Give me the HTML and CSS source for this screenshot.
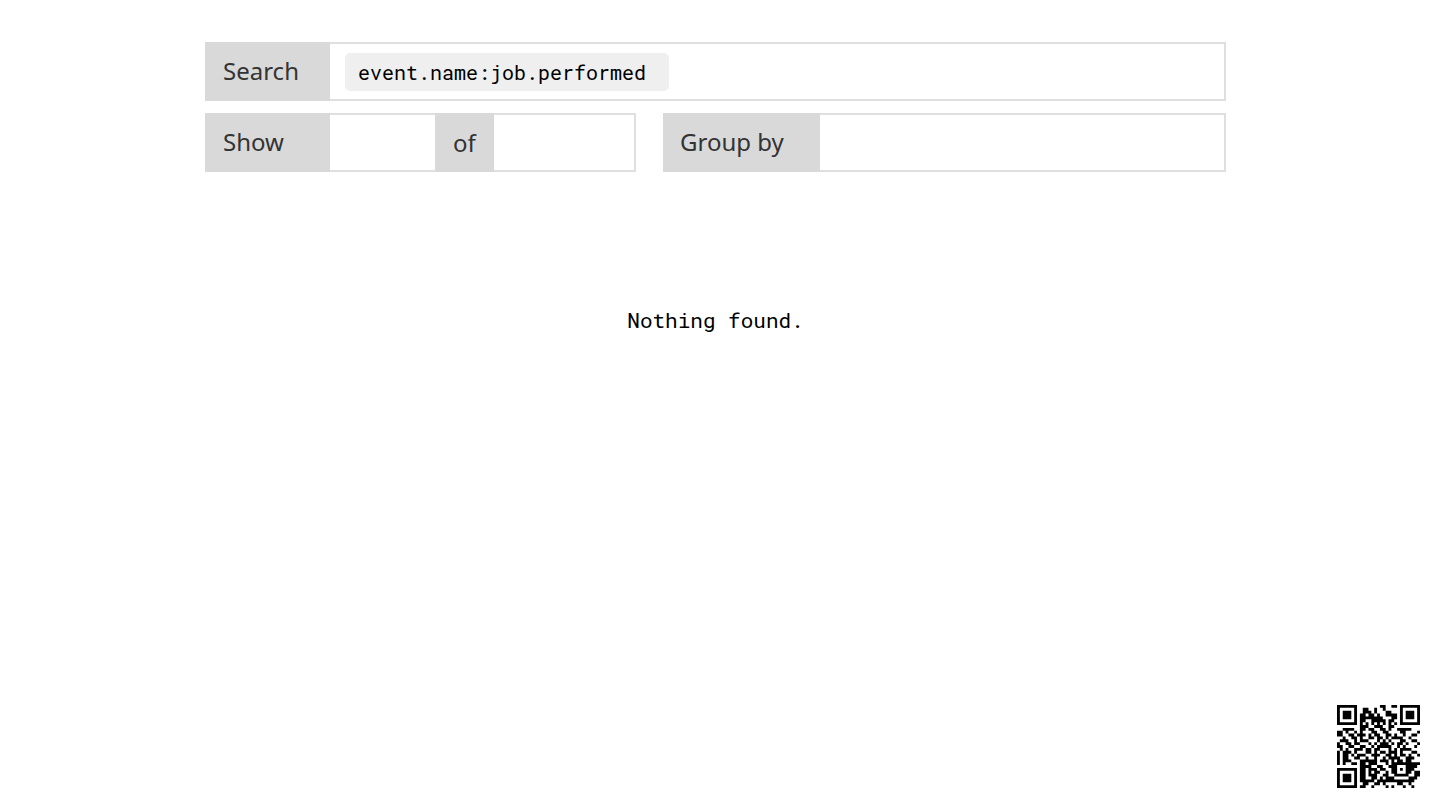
FILE: index.html
```html
<!DOCTYPE html>
<html lang="en">
<head>
    <meta charset="UTF-8">
    <meta name="viewport" content="width=device-width, initial-scale=1.0">
    <title>Event search</title>
    <link rel="stylesheet" href="styles.css">
</head>
<body>
    <main class="page">
        <form class="filters">
            <div class="field field-search">
                <label class="label" for="search">Search</label>
                <div class="tokens">
                    <input class="token" type="text" id="search" value="event.name:job.performed" spellcheck="false">
                </div>
            </div>
            <div class="field">
                <label class="label" for="show">Show</label>
                <input class="input input-short" type="text" id="show">
                <label class="label label-of" for="of">of</label>
                <input class="input" type="text" id="of">
            </div>
            <div class="field">
                <label class="label label-group" for="group">Group by</label>
                <input class="input" type="text" id="group">
            </div>
        </form>

        <p class="empty">Nothing found.</p>
    </main>

    <svg class="qr" id="qr" viewBox="0 0 29 29" role="img" aria-label="QR code"></svg>

    <script src="qr.js"></script>
</body>
</html>
```
FILE: styles.css
```css
* {
    box-sizing: border-box;
}
body {
    margin: 0;
    background: #fff;
    color: #000;
    font-family: "Noto Sans", sans-serif;
}
.page {
    padding: 42px 214px 0 205px;
}
.filters {
    display: grid;
    grid-template-columns: 431fr 563fr;
    gap: 12px 27px;
}
.field {
    display: flex;
    min-width: 0;
    height: 59px;
    border: 2px solid #dfdfdf;
}
.field-search {
    grid-column: 1 / -1;
}
.label {
    flex: none;
    width: 125px;
    margin: -2px 0 -2px -2px;
    padding-left: 18px;
    background: #d9d9d9;
    color: #333;
    font-size: 24px;
    line-height: 58px;
}
.label-of {
    width: 59px;
    margin-left: 0;
    line-height: 60px;
}
.label-group {
    width: 157px;
    padding-left: 17px;
}
.input {
    flex: 1;
    min-width: 0;
    padding: 0 12px;
    border: none;
    background: none;
    font-family: "Roboto Mono", "DejaVu Sans Mono", monospace;
    font-size: 20px;
}
.input-short {
    flex: none;
    width: 105px;
}
.tokens {
    flex: 1;
    display: flex;
    align-items: center;
    padding-left: 15px;
}
.token {
    width: 324px;
    height: 38px;
    padding: 0 13px;
    border: none;
    border-radius: 5px;
    background: #efefef;
    color: #000;
    font-family: "Roboto Mono", "DejaVu Sans Mono", monospace;
    font-size: 20px;
}
.input:focus,
.token:focus {
    outline: none;
}
.empty {
    margin: 133px 0 0;
    text-align: center;
    font-family: "Roboto Mono", "DejaVu Sans Mono", monospace;
    font-size: 21px;
    line-height: 30px;
}
.qr {
    position: fixed;
    right: 20px;
    bottom: 22px;
    width: 83px;
    height: 83px;
}
```
FILE: qr.js
```js
const rows = [
    '11111110000000011001101111111',
    '10000010011001001000001000001',
    '10111010011101000110001011101',
    '10111010110110100111101011101',
    '10111010111111110001101011101',
    '10000010110011111011001000001',
    '11111110101010101010101111111',
    '00000000111001110011000000000',
    '00111100110110011010011111000',
    '11010010100011001100001100001',
    '11001101110101100110100100110',
    '00100110100110110101111001000',
    '01110010111000101010001100110',
    '10011011000101011101011010001',
    '11001100110010111110010100010',
    '01010011101101100010101111000',
    '10111010001101011011101000110',
    '10110101110011100110101101001',
    '10110011001001001011110011100',
    '10111000111111011101011011000',
    '10100110110111000101111111111',
    '00000000111100110011100011110',
    '11111110110111011001101011100',
    '10000010110101100101100011011',
    '10111010110111001100111110011',
    '10111010110011010111000001110',
    '10111010111110111111111111100',
    '10000010011001101000011001000',
    '11111110110010000101000100100'
];

// one horizontal bar for every run of dark modules
let d = '';
rows.forEach((row, y) => {
    for (const run of row.matchAll(/1+/g)) {
        d += `M${run.index} ${y}h${run[0].length}v1h-${run[0].length}z`;
    }
});

const path = document.createElementNS('http://www.w3.org/2000/svg', 'path');
path.setAttribute('d', d);
document.getElementById('qr').appendChild(path);
```
